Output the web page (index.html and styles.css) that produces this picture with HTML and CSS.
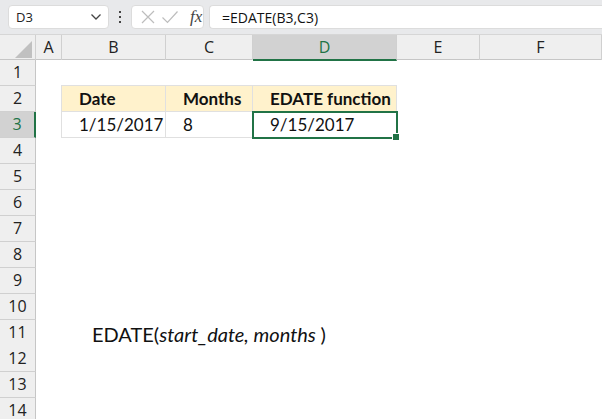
FILE: index.html
```html
<!DOCTYPE html>
<html lang="en">
  <head>
    <meta charset="UTF-8" />
    <meta name="viewport" content="width=device-width, initial-scale=1.0" />
    <title>EDATE function</title>

    <link rel="stylesheet" href="styles.css">
  </head>
  <body>
    <header class="fbar">
      <div class="fbar__name">
        <span>D3</span>
        <svg class="fbar__chev" width="12" height="8" viewBox="0 0 12 8">
          <path d="M1.5 1.5 L6 6 L10.5 1.5" fill="none" stroke="#444" stroke-width="1.3" />
        </svg>
      </div>
      <div class="fbar__dots">
        <span></span><span></span><span></span>
      </div>
      <div class="fbar__btns">
        <svg width="16" height="16" viewBox="0 0 16 16">
          <path d="M2 2 L14 14 M14 2 L2 14" stroke="#bdbdbd" stroke-width="1.2" />
        </svg>
        <svg width="18" height="16" viewBox="0 0 18 16">
          <path d="M1.5 8.5 L6.5 13.5 L16.5 2.5" fill="none" stroke="#bdbdbd" stroke-width="1.2" />
        </svg>
        <span class="fbar__fx">fx</span>
      </div>
      <div class="fbar__input">=EDATE(B3,C3)</div>
    </header>

    <section class="sheet">
      <div class="row row--head">
        <div class="corner"><span class="corner__tri"></span></div>
        <div class="colhead">A</div>
        <div class="colhead">B</div>
        <div class="colhead">C</div>
        <div class="colhead colhead--sel">D</div>
        <div class="colhead">E</div>
        <div class="colhead">F</div>
      </div>

      <div class="row"><div class="rowhead">1</div></div>

      <div class="row">
        <div class="rowhead">2</div>
        <div></div>
        <div class="cell cell--th">Date</div>
        <div class="cell cell--th">Months</div>
        <div class="cell cell--th">EDATE function</div>
      </div>

      <div class="row">
        <div class="rowhead rowhead--sel">3</div>
        <div></div>
        <div class="cell">1/15/2017</div>
        <div class="cell">8</div>
        <div class="cell cell--active">9/15/2017<span class="handle"></span></div>
      </div>

      <div class="row"><div class="rowhead">4</div></div>
      <div class="row"><div class="rowhead">5</div></div>
      <div class="row"><div class="rowhead">6</div></div>
      <div class="row"><div class="rowhead">7</div></div>
      <div class="row"><div class="rowhead">8</div></div>
      <div class="row"><div class="rowhead">9</div></div>
      <div class="row"><div class="rowhead">10</div></div>
      <div class="row">
        <div class="rowhead">11</div>
        <div class="syntax">EDATE(<i>start_date, months </i>)</div>
      </div>
      <div class="row"><div class="rowhead">12</div></div>
      <div class="row"><div class="rowhead">13</div></div>
      <div class="row"><div class="rowhead">14</div></div>
    </section>
  </body>
</html>
```

FILE: styles.css
```css
html,
body {
  margin: 0;
  background: #fff;
  font-family: "Open Sans", "Noto Sans", sans-serif;
  overflow: hidden;
}

/* formula bar */
.fbar {
  display: flex;
  align-items: center;
  height: 35px;
  padding: 0 0 0 8px;
  background: #e8e9eb;
  border-bottom: 1px solid #d6d6d6;
  box-sizing: border-box;
}
.fbar__name,
.fbar__btns,
.fbar__input {
  height: 24px;
  background: #fff;
  border: 1px solid #dcdcdc;
  border-radius: 4px;
  box-sizing: border-box;
  display: flex;
  align-items: center;
}
.fbar__name {
  width: 101px;
  justify-content: space-between;
  padding: 0 6px 0 7px;
  font-size: 13px;
  color: #222;
}
.fbar__dots {
  width: 22px;
  display: flex;
  flex-direction: column;
  align-items: center;
  gap: 3px;
}
.fbar__dots span {
  width: 2px;
  height: 2px;
  background: #444;
}
.fbar__btns {
  width: 73px;
  gap: 5px;
  padding-left: 8px;
}
.fbar__fx {
  font-family: "Liberation Serif", serif;
  font-style: italic;
  font-size: 17px;
  color: #444;
  margin-left: 6px;
}
.fbar__input {
  flex: 1;
  margin-left: 5px;
  padding-left: 12px;
  font-size: 14px;
  color: #111;
  border-right: 0;
  border-radius: 4px 0 0 4px;
}

/* grid */
.row {
  display: grid;
  grid-template-columns: 36px 26px 104px 87px 144px 83px 122px;
  height: 26px;
}
.row--head {
  height: 25px;
  background: #efefef;
  border-bottom: 1px solid #c6c6c6;
  box-sizing: border-box;
}
.corner {
  position: relative;
  border-right: 1px solid #d0d0d0;
}
.corner__tri {
  position: absolute;
  right: 3px;
  bottom: 2px;
  width: 0;
  height: 0;
  border-left: 17px solid transparent;
  border-bottom: 17px solid #c0c0c0;
}
.colhead {
  border-right: 1px solid #d0d0d0;
  text-align: center;
  font-size: 16px;
  line-height: 24px;
  color: #222;
}
.colhead--sel {
  background: #d2d2d2;
  color: #217346;
  border-bottom: 2px solid #217346;
  margin-bottom: -1px;
}
.rowhead {
  background: #efefef;
  border-right: 1px solid #c6c6c6;
  border-bottom: 1px solid #d0d0d0;
  text-align: center;
  font-size: 16px;
  line-height: 25px;
  color: #222;
}
.rowhead--sel {
  background: #d2d2d2;
  color: #217346;
  border-right: 2px solid #217346;
}

/* cells */
.cell {
  position: relative;
  font-family: "Lato", sans-serif;
  font-size: 17px;
  line-height: 25px;
  padding-left: 17px;
  color: #111;
  border-right: 1px solid #e0e0e0;
  border-bottom: 1px solid #e0e0e0;
}
.row:nth-child(3) .cell {
  border-top: 1px solid #e0e0e0;
  margin-top: -1px;
}
.row .cell:nth-child(3) {
  border-left: 1px solid #e0e0e0;
  margin-left: -1px;
}
.cell--th {
  background: #fff2cc;
  font-weight: bold;
}
.cell--active {
  outline: 2px solid #217346;
  outline-offset: -1px;
}
.handle {
  position: absolute;
  right: -4px;
  bottom: -4px;
  width: 6px;
  height: 6px;
  background: #217346;
  border: 1px solid #fff;
}
.syntax {
  grid-column: 3 / span 5;
  font-family: "Lato", sans-serif;
  font-size: 20px;
  line-height: 28px;
  padding-left: 30px;
  color: #111;
  white-space: nowrap;
}
```
